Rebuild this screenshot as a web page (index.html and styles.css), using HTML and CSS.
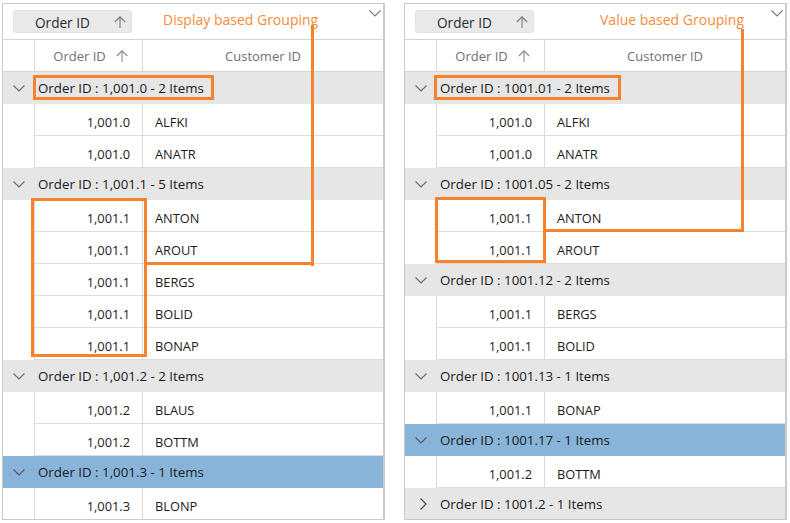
FILE: index.html
```html
<!DOCTYPE html>
<html>
<head>
<meta charset="utf-8">
<link rel="stylesheet" href="styles.css">
</head>
<body>
<div class="page">
  <div class="grid">
    <div class="drop">
      <div class="chip"><span>Order ID</span><svg class="arrow" width="12" height="12" viewBox="0 0 12 12"><path d="M6 0.8V12M0.8 6L6 0.8L11.2 6" fill="none" stroke="#7a7a7a" stroke-width="1.1"/></svg></div>
      <svg class="topchev" width="12" height="7" viewBox="0 0 12 7"><path d="M0.5 0.5L6 6L11.5 0.5" fill="none" stroke="#777" stroke-width="1.1"/></svg>
    </div>
    <div class="hdr">
      <div class="c-ind"></div>
      <div class="c-id hcell"><span>Order ID</span><svg width="12" height="12" viewBox="0 0 12 12"><path d="M6 0.8V12M0.8 6L6 0.8L11.2 6" fill="none" stroke="#8a8a8a" stroke-width="1.1"/></svg></div>
      <div class="c-cu hcell">Customer ID</div>
    </div>
    <div class="grp"><svg class="gchev" width="12" height="7" viewBox="0 0 12 7"><path d="M0.5 0.5L6 6L11.5 0.5" fill="none" stroke="#666" stroke-width="1.1"/></svg><span>Order ID : 1,001.0 - 2 Items</span></div>
    <div class="row"><div class="c-ind"></div><div class="c-id">1,001.0</div><div class="c-cu">ALFKI</div></div>
    <div class="row"><div class="c-ind"></div><div class="c-id">1,001.0</div><div class="c-cu">ANATR</div></div>
    <div class="grp"><svg class="gchev" width="12" height="7" viewBox="0 0 12 7"><path d="M0.5 0.5L6 6L11.5 0.5" fill="none" stroke="#666" stroke-width="1.1"/></svg><span>Order ID : 1,001.1 - 5 Items</span></div>
    <div class="row"><div class="c-ind"></div><div class="c-id">1,001.1</div><div class="c-cu">ANTON</div></div>
    <div class="row"><div class="c-ind"></div><div class="c-id">1,001.1</div><div class="c-cu">AROUT</div></div>
    <div class="row"><div class="c-ind"></div><div class="c-id">1,001.1</div><div class="c-cu">BERGS</div></div>
    <div class="row"><div class="c-ind"></div><div class="c-id">1,001.1</div><div class="c-cu">BOLID</div></div>
    <div class="row"><div class="c-ind"></div><div class="c-id">1,001.1</div><div class="c-cu">BONAP</div></div>
    <div class="grp"><svg class="gchev" width="12" height="7" viewBox="0 0 12 7"><path d="M0.5 0.5L6 6L11.5 0.5" fill="none" stroke="#666" stroke-width="1.1"/></svg><span>Order ID : 1,001.2 - 2 Items</span></div>
    <div class="row"><div class="c-ind"></div><div class="c-id">1,001.2</div><div class="c-cu">BLAUS</div></div>
    <div class="row"><div class="c-ind"></div><div class="c-id">1,001.2</div><div class="c-cu">BOTTM</div></div>
    <div class="grp sel"><svg class="gchev" width="12" height="7" viewBox="0 0 12 7"><path d="M0.5 0.5L6 6L11.5 0.5" fill="none" stroke="#555" stroke-width="1.1"/></svg><span>Order ID : 1,001.3 - 1 Items</span></div>
    <div class="row"><div class="c-ind"></div><div class="c-id">1,001.3</div><div class="c-cu">BLONP</div></div>
  </div>

  <div class="grid">
    <div class="drop">
      <div class="chip"><span>Order ID</span><svg class="arrow" width="12" height="12" viewBox="0 0 12 12"><path d="M6 0.8V12M0.8 6L6 0.8L11.2 6" fill="none" stroke="#7a7a7a" stroke-width="1.1"/></svg></div>
      <svg class="topchev" width="12" height="7" viewBox="0 0 12 7"><path d="M0.5 0.5L6 6L11.5 0.5" fill="none" stroke="#777" stroke-width="1.1"/></svg>
    </div>
    <div class="hdr">
      <div class="c-ind"></div>
      <div class="c-id hcell"><span>Order ID</span><svg width="12" height="12" viewBox="0 0 12 12"><path d="M6 0.8V12M0.8 6L6 0.8L11.2 6" fill="none" stroke="#8a8a8a" stroke-width="1.1"/></svg></div>
      <div class="c-cu hcell">Customer ID</div>
    </div>
    <div class="grp"><svg class="gchev" width="12" height="7" viewBox="0 0 12 7"><path d="M0.5 0.5L6 6L11.5 0.5" fill="none" stroke="#666" stroke-width="1.1"/></svg><span>Order ID : 1001.01 - 2 Items</span></div>
    <div class="row"><div class="c-ind"></div><div class="c-id">1,001.0</div><div class="c-cu">ALFKI</div></div>
    <div class="row"><div class="c-ind"></div><div class="c-id">1,001.0</div><div class="c-cu">ANATR</div></div>
    <div class="grp"><svg class="gchev" width="12" height="7" viewBox="0 0 12 7"><path d="M0.5 0.5L6 6L11.5 0.5" fill="none" stroke="#666" stroke-width="1.1"/></svg><span>Order ID : 1001.05 - 2 Items</span></div>
    <div class="row"><div class="c-ind"></div><div class="c-id">1,001.1</div><div class="c-cu">ANTON</div></div>
    <div class="row"><div class="c-ind"></div><div class="c-id">1,001.1</div><div class="c-cu">AROUT</div></div>
    <div class="grp"><svg class="gchev" width="12" height="7" viewBox="0 0 12 7"><path d="M0.5 0.5L6 6L11.5 0.5" fill="none" stroke="#666" stroke-width="1.1"/></svg><span>Order ID : 1001.12 - 2 Items</span></div>
    <div class="row"><div class="c-ind"></div><div class="c-id">1,001.1</div><div class="c-cu">BERGS</div></div>
    <div class="row"><div class="c-ind"></div><div class="c-id">1,001.1</div><div class="c-cu">BOLID</div></div>
    <div class="grp"><svg class="gchev" width="12" height="7" viewBox="0 0 12 7"><path d="M0.5 0.5L6 6L11.5 0.5" fill="none" stroke="#666" stroke-width="1.1"/></svg><span>Order ID : 1001.13 - 1 Items</span></div>
    <div class="row"><div class="c-ind"></div><div class="c-id">1,001.1</div><div class="c-cu">BONAP</div></div>
    <div class="grp sel"><svg class="gchev" width="12" height="7" viewBox="0 0 12 7"><path d="M0.5 0.5L6 6L11.5 0.5" fill="none" stroke="#555" stroke-width="1.1"/></svg><span>Order ID : 1001.17 - 1 Items</span></div>
    <div class="row"><div class="c-ind"></div><div class="c-id">1,001.2</div><div class="c-cu">BOTTM</div></div>
    <div class="grp"><svg class="gchev rchev" width="7" height="12" viewBox="0 0 7 12"><path d="M0.5 0.5L6 6L0.5 11.5" fill="none" stroke="#444" stroke-width="1.1"/></svg><span>Order ID : 1001.2 - 1 Items</span></div>
  </div>

  <div class="note t-left">Display based Grouping</div>
  <div class="note t-right">Value based Grouping</div>
  <div class="obox b1"></div>
  <div class="obox b2"></div>
  <div class="oline l1v"></div>
  <div class="oline l1h"></div>
  <div class="obox b3"></div>
  <div class="obox b4"></div>
  <div class="oline l2v"></div>
  <div class="oline l2h"></div>
</div>
</body>
</html>
```
FILE: styles.css
```css
* { box-sizing: border-box; }
html, body { margin: 0; padding: 0; background: #fff; }
body { font-family: "Open Sans", "Noto Sans", sans-serif; font-size: 12.5px; color: #1b1b1b; }
.page { position: relative; width: 790px; height: 523px; display: flex; gap: 19px; padding: 3px 0 0 2px; }
.grid { width: 383px; height: 517px; border: 1px solid #c9c9c9; border-right: 2px solid #cbcbcb; overflow: hidden; display: flex; flex-direction: column; }
.drop { height: 36px; flex: none; border-bottom: 1px solid #d4d4d4; display: flex; align-items: flex-start; justify-content: space-between; padding: 6px 0 0 10px; }
.chip { width: 119px; height: 23px; background: #e9e9e9; border: 1px solid #e2e2e2; border-radius: 3px; display: flex; align-items: center; justify-content: space-between; padding: 1px 5px 0 21px; color: #2a2a2a; font-size: 13.6px; }
.topchev { margin: 0px 2px 0 0; }
.hdr { height: 32px; flex: none; display: flex; border-bottom: 1px solid #d4d4d4; color: #707070; font-size: 13px; }
.hcell { display: flex; align-items: center; justify-content: center; }
.hdr .c-id { gap: 10px; padding-left: 4px; }
.c-ind { width: 32px; flex: none; border-right: 1px solid #d9d9d9; }
.c-id { width: 108px; flex: none; border-right: 1px solid #d9d9d9; }
.c-cu { flex: 1; }
.row { height: 32px; flex: none; display: flex; }
.row .c-id, .row .c-cu { border-bottom: 1px solid #dcdcdc; display: flex; align-items: center; padding-top: 5px; font-size: 12.8px; }
.row .c-id { justify-content: flex-end; padding-right: 12px; }
.row .c-cu { padding-left: 12px; }
.grp { height: 32px; flex: none; background: #e6e6e6; display: flex; align-items: center; padding-left: 10px; gap: 13px; font-size: 13.3px; color: #1a1a1a; }
.grp.sel { background: #89b4d9; }
.gchev { flex: none; }
.rchev { margin-left: 5px; margin-right: 0; }
.note { position: absolute; top: 10px; color: #f98b3b; font-size: 14px; font-family: "Open Sans", "Noto Sans", sans-serif; }
.t-left { left: 163px; }
.t-right { left: 600px; }
.obox { position: absolute; border: 3px solid #f7822d; }
.oline { position: absolute; background: #f7822d; }
.b1 { left: 33px; top: 75px; width: 181px; height: 25px; }
.b2 { left: 31px; top: 198px; width: 116px; height: 159px; }
.l1v { left: 311px; top: 25px; width: 3px; height: 241px; }
.l1h { left: 144px; top: 262px; width: 170px; height: 3px; }
.b3 { left: 434px; top: 75px; width: 187px; height: 25px; }
.b4 { left: 435px; top: 197px; width: 111px; height: 66px; }
.l2v { left: 741px; top: 29px; width: 3px; height: 203px; }
.l2h { left: 543px; top: 229px; width: 201px; height: 3px; }
```
